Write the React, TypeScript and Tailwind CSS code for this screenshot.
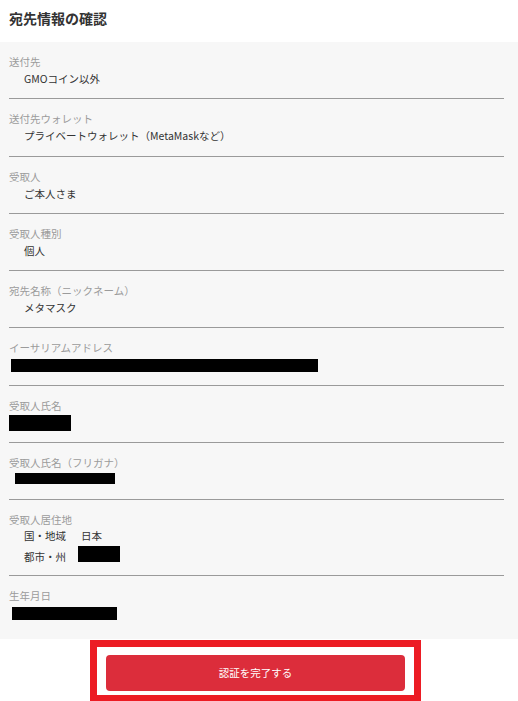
import React from "react";

const font = { fontFamily: '"Noto Sans CJK JP", "Noto Sans", sans-serif' };

function Row({ label, children, h = "h-[57px]", border = true }: { label: string; children: React.ReactNode; h?: string; border?: boolean }) {
  return (
    <div className={`${h} pt-[12px] ${border ? "border-b border-[#9a9a9a]" : ""}`}>
      <div className="text-[10.5px] leading-[16px] text-[#9b9b9b]">{label}</div>
      {children}
    </div>
  );
}

function Val({ children }: { children: React.ReactNode }) {
  return <div className="pl-[15px] text-[10.5px] leading-[16px] text-[#333] mt-[1px]">{children}</div>;
}

export default function App() {
  return (
    <div className="w-[518px] h-[701px] bg-white overflow-hidden" style={font}>
      <div className="h-[42px] px-[9px] pt-[9px]">
        <div className="text-[14px] leading-[18px] font-bold text-[#333]">宛先情報の確認</div>
      </div>
      <div className="bg-[#f7f7f7] pl-[9px] pr-[14px] h-[597px]">
        <Row label="送付先"><Val>GMOコイン以外</Val></Row>
        <Row label="送付先ウォレット" h="h-[58px]"><Val>プライベートウォレット（MetaMaskなど）</Val></Row>
        <Row label="受取人"><Val>ご本人さま</Val></Row>
        <Row label="受取人種別"><Val>個人</Val></Row>
        <Row label="宛先名称（ニックネーム）"><Val>メタマスク</Val></Row>
        <Row label="イーサリアムアドレス" h="h-[58px]">
          <div className="ml-[2px] mt-[3px] w-[307px] h-[13px] bg-black" />
        </Row>
        <Row label="受取人氏名">
          <div className="mt-[1px] w-[62px] h-[16px] bg-black" />
        </Row>
        <Row label="受取人氏名（フリガナ）">
          <div className="ml-[6px] mt-[2px] w-[100px] h-[11px] bg-black" />
        </Row>
        <Row label="受取人居住地" h="h-[76px]">
          <div className="flex items-center pl-[15px] text-[10.5px] leading-[16px] text-[#333]">
            <span className="w-[57px] shrink-0">国・地域</span>
            <span>日本</span>
          </div>
          <div className="flex items-center pl-[15px] text-[10.5px] leading-[16px] text-[#333] mt-[5px]">
            <span className="w-[54px] shrink-0">都市・州</span>
            <span className="inline-block w-[42px] h-[16px] bg-black -mt-[6px]" />
          </div>
        </Row>
        <Row label="生年月日" h="h-[62px]" border={false}>
          <div className="ml-[3px] mt-[3px] w-[105px] h-[13px] bg-black" />
        </Row>
      </div>
      <div className="ml-[90px] w-[331px] h-[62px] mt-[1px] border-[7px] border-[#ec1c24] bg-white pt-[8px] px-[9px]">
        <button className="w-full h-[36px] rounded-[4px] bg-[#dc2d3b] text-white text-[10.5px] flex items-center justify-center" style={font}>
          認証を完了する
        </button>
      </div>
    </div>
  );
}
